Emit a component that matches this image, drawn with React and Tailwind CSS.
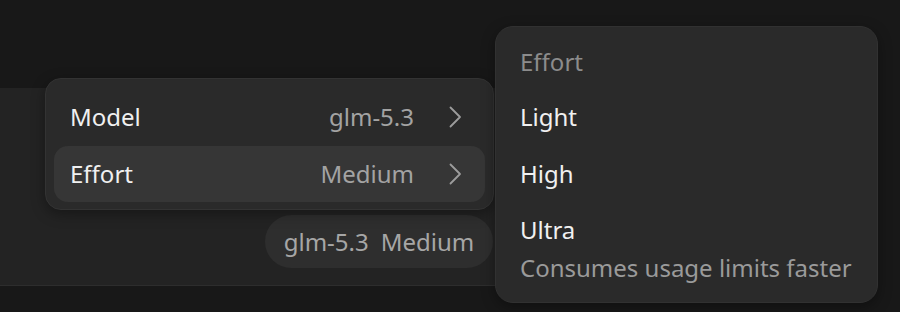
import React from 'react';

const FONT = { fontFamily: '"Noto Sans", "Open Sans", sans-serif' };

function Chevron() {
  return (
    <svg width="14" height="24" viewBox="0 0 14 24" fill="none" className="shrink-0">
      <path d="M2.5 2.5l9.5 9.5-9.5 9.5" stroke="#9c9c9c" strokeWidth="1.8" strokeLinecap="round" strokeLinejoin="round" />
    </svg>
  );
}

const ROWS = [
  { label: 'Model', value: 'glm-5.3', active: false },
  { label: 'Effort', value: 'Medium', active: true },
];

const LEVELS = ['Light', 'High', 'Ultra'];

export default function App() {
  return (
    <div className="relative w-[900px] h-[312px] bg-[#181818] overflow-hidden text-[24px] leading-none" style={FONT}>
      {/* input panel */}
      <div className="mt-[88px] w-[870px] h-[198px] bg-[#232323] border-b border-[#2d2d2d] flex items-end pb-[17px] pl-[265px]">
        <div className="h-[53px] w-[228px] rounded-full bg-[#2e2e2e] flex items-center justify-center gap-[12px] text-[#a6a6a6]">
          <span>glm-5.3</span>
          <span>Medium</span>
        </div>
      </div>

      {/* main menu */}
      <div className="absolute left-[45px] top-[78px] w-[449px] rounded-[16px] bg-[#2a2a2a] border border-[#333333] px-[8px] pt-[10px] pb-[7px] flex flex-col gap-[1px] shadow-[0_4px_14px_rgba(0,0,0,0.35)]">
        {ROWS.map((r) => (
          <div
            key={r.label}
            className={`h-[56px] flex items-center pl-[16px] pr-[23px] rounded-[14px] ${r.active ? 'bg-[#363636]' : ''}`}
          >
            <span className="flex-1 text-[#f0f0f0]">{r.label}</span>
            <span className="text-[#a3a3a3] mr-[34px]">{r.value}</span>
            <Chevron />
          </div>
        ))}
      </div>

      {/* effort submenu */}
      <div className="absolute left-[495px] top-[26px] w-[383px] h-[277px] rounded-[18px] bg-[#2a2a2a] border border-[#313131] pl-[24px] pt-[15px] flex flex-col shadow-[0_4px_14px_rgba(0,0,0,0.35)]">
        <div className="h-[40px] flex items-center text-[#8c8c8c]">Effort</div>
        <div className="h-[40px] mt-[15px] flex items-center text-[#f0f0f0]">{LEVELS[0]}</div>
        <div className="h-[40px] mt-[17px] flex items-center text-[#f0f0f0]">{LEVELS[1]}</div>
        <div className="h-[40px] mt-[16px] flex items-center text-[#f0f0f0]">{LEVELS[2]}</div>
        <div className="h-[32px] mt-[2px] flex items-center text-[#9a9a9a]">Consumes usage limits faster</div>
      </div>
    </div>
  );
}
